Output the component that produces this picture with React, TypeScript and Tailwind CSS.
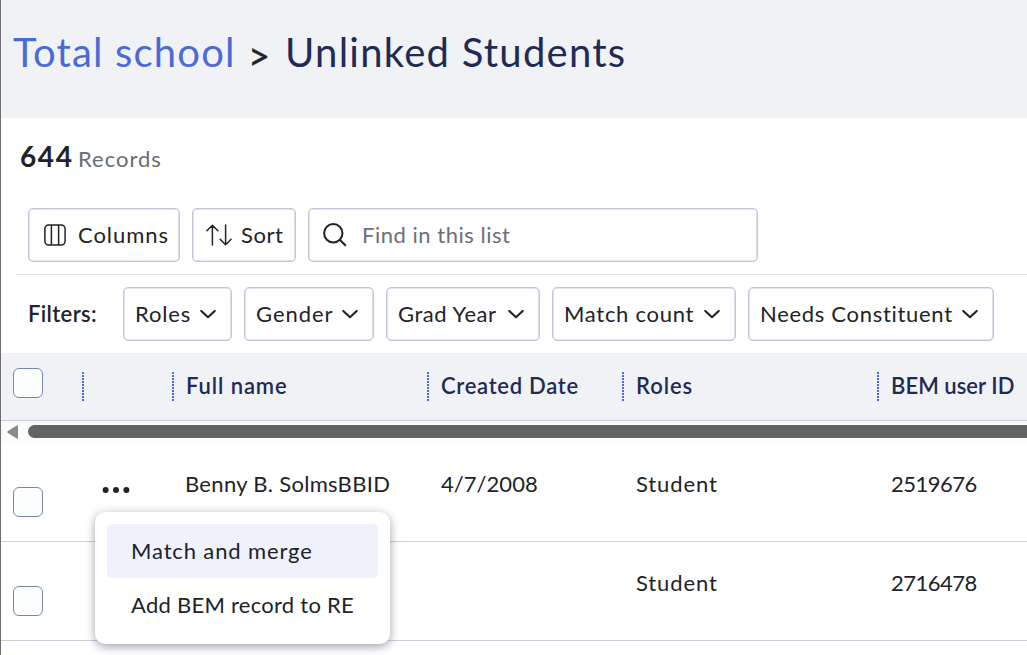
import React from "react";
import type { ReactNode } from "react";

const box = "flex h-[54px] shrink-0 items-center rounded-[5px] border border-[#c0c5da] bg-white whitespace-nowrap shadow-[inset_0_0_0_0.6px_#c9cde0]";
const grid = "grid grid-cols-[83px_90px_255px_195px_255px_1fr]";

function Checkbox({ className = "" }: { className?: string }) {
  return <span className={`block size-[30px] rounded-[6px] border border-[#7687b6] bg-[#fcfdfd] ${className}`} />;
}

function ColumnsIcon() {
  return (
    <svg className="h-[22px] w-[22px] shrink-0" viewBox="0 0 22 22" fill="none" stroke="#212327" strokeWidth="1.5">
      <rect x="0.9" y="0.9" width="20.2" height="20.2" rx="3.8" />
      <path d="M7.4 1v20M14.6 1v20" />
    </svg>
  );
}

function SortIcon() {
  return (
    <svg className="h-[22px] w-[26px] shrink-0" viewBox="0 0 26 22" fill="none" stroke="#212327" strokeWidth="1.5" strokeLinecap="round" strokeLinejoin="round">
      <path d="M6.4 21V1.2M.9 6.7l5.5-5.5 5.5 5.5M19.6 1v19.8M14.1 15.3l5.5 5.5 5.5-5.5" />
    </svg>
  );
}

function SearchIcon() {
  return (
    <svg className="h-[24px] w-[24px] shrink-0" viewBox="0 0 24 24" fill="none" stroke="#212327" strokeWidth="2">
      <circle cx="10.3" cy="10.3" r="9.2" />
      <path d="M16.8 16.8l6 6" />
    </svg>
  );
}

function Chevron() {
  return (
    <svg className="h-[10px] w-[16px] shrink-0" viewBox="0 0 16 10" fill="none" stroke="#212327" strokeWidth="2.1" strokeLinecap="round" strokeLinejoin="round">
      <path d="M1.3 1.9L8 8.2l6.7-6.3" />
    </svg>
  );
}

function Filter({ label, className }: { label: string; className: string }) {
  return (
    <button className={`${box} justify-between pr-[15px] pl-[11px] ${className}`}>
      <span>{label}</span>
      <Chevron />
    </button>
  );
}

function HeaderCell({ children }: { children?: ReactNode }) {
  return (
    <div className="flex h-[65px] items-center justify-between">
      <span className="whitespace-nowrap">{children}</span>
      <span className="mt-px h-[29px] w-[2px] bg-[repeating-linear-gradient(to_bottom,#4a6bdc_0_2px,transparent_2px_3px)]" />
    </div>
  );
}

function Row({ menu, name, date, role, id }: { menu?: ReactNode; name?: string; date?: string; role: string; id: string }) {
  return (
    <div className={`${grid} h-[99px] border-b border-[#cbd0dd]`}>
      <Checkbox className="mt-[44px] ml-[12px]" />
      <div>{menu}</div>
      <div className="pt-[28px] pl-[11px] tracking-[0.31px] whitespace-nowrap">{name}</div>
      <div className="pt-[28px] pl-[12px] tracking-[0.04px]">{date}</div>
      <div className="pt-[28px] pl-[12px] tracking-[0.89px]">{role}</div>
      <div className="pt-[28px] pl-[12px] tracking-[-0.5px]">{id}</div>
    </div>
  );
}

export default function App() {
  return (
    <div className="h-[655px] w-[1027px] overflow-hidden border-l border-[#6e6e6e] bg-white font-['Lato',sans-serif] text-[22px] leading-[26px] text-[#212327]">
      <header className="flex h-[118px] items-start bg-[#f1f2f6] pt-[27px] pl-[12px] text-[40px] leading-[50px] whitespace-nowrap">
        <a className="w-[235px] tracking-[1.18px] text-[#4a6bd4]">Total school</a>
        <span className="w-[37px] pt-[3px] text-[38px] leading-[50px] [-webkit-text-stroke:0.4px_#212327]">&gt;</span>
        <h1 className="tracking-[1.25px] text-[#1e2b54]">Unlinked Students</h1>
      </header>

      <section className="flex h-[90px] items-start pt-[25px] pl-[19px]">
        <span className="w-[58px] text-[28px] font-bold leading-[26px] tracking-[1.6px]">644</span>
        <span className="pt-[3px] tracking-[1px] text-[#686c73]">Records</span>
      </section>

      <section className="ml-[15px] flex h-[67px] gap-[12px] border-b border-[#e2e3e6] pl-[12px]">
        <button className={`${box} w-[152px] gap-[12px] pl-[15px] tracking-[0.95px]`}>
          <ColumnsIcon />
          Columns
        </button>
        <button className={`${box} w-[104px] gap-[9px] pl-[13px] tracking-[0.55px]`}>
          <SortIcon />
          Sort
        </button>
        <div className={`${box} w-[450px] gap-[15px] pl-[14px] tracking-[0.52px] text-[#6c6f76]`}>
          <SearchIcon />
          Find in this list
        </div>
      </section>

      <section className="flex h-[78px] items-start gap-[12px] pt-[12px] pl-[27px]">
        <span className="w-[83px] pt-[14px] font-semibold tracking-[0.36px]">Filters:</span>
        <Filter label="Roles" className="w-[109px] tracking-[0.85px]" />
        <Filter label="Gender" className="w-[130px] tracking-[0.95px]" />
        <Filter label="Grad Year" className="w-[154px] tracking-[0.56px]" />
        <Filter label="Match count" className="w-[184px] tracking-[0.72px]" />
        <Filter label="Needs Constituent" className="w-[246px] tracking-[0.7px]" />
      </section>

      <div className={`${grid} h-[68px] border-b border-[#c6cce0] bg-[#f1f2f6] font-semibold text-[#1e2b54]`}>
        <div className="flex items-start justify-between">
          <Checkbox className="mt-[15px] ml-[12px]" />
          <HeaderCell />
        </div>
        <HeaderCell />
        <HeaderCell><span className="pl-[12px] tracking-[0.9px]">Full name</span></HeaderCell>
        <HeaderCell><span className="pl-[12px] tracking-[0.7px]">Created Date</span></HeaderCell>
        <HeaderCell><span className="pl-[12px] tracking-[0.95px]">Roles</span></HeaderCell>
        <div className="flex h-[65px] items-center pl-[12px] tracking-[0.05px] whitespace-nowrap">BEM user ID</div>
      </div>

      <div className="flex h-[22px] items-start bg-[#fbfbfb] pt-[4px] pl-[6px]">
        <svg className="h-[15px] w-[12px]" viewBox="0 0 12 15" fill="#8a8a8a">
          <path d="M9.8.4Q11-.2 11 1.2V12.8Q11 14.2 9.8 13.6L.8 8Q-.2 7 .8 6Z" />
        </svg>
        <div className="ml-[9px] h-[13px] flex-1 rounded-l-full bg-[#636363]" />
      </div>

      <main>
        <Row
          name="Benny B. SolmsBBID"
          date="4/7/2008"
          role="Student"
          id="2519676"
          menu={
            <div className="relative pt-[43px] pl-[18px]">
              <svg className="h-[8px] w-[28px]" viewBox="0 0 28 8" fill="#212327">
                <circle cx="3.6" cy="4" r="3" />
                <circle cx="14" cy="4" r="3" />
                <circle cx="24.4" cy="4" r="3" />
              </svg>
              <div className="absolute top-[69px] left-[11px] z-10 h-[132px] w-[295px] rounded-[10px] bg-white p-[12px] shadow-[0_3px_9px_rgba(30,35,55,0.36),0_0_14px_rgba(30,35,55,0.08)]">
                <div className="flex h-[54px] items-center rounded-[5px] bg-[#eff2fc] pl-[24px] tracking-[0.87px] whitespace-nowrap">Match and merge</div>
                <div className="flex h-[54px] items-center pl-[24px] tracking-[0.26px] whitespace-nowrap">Add BEM record to RE</div>
              </div>
            </div>
          }
        />
        <Row role="Student" id="2716478" />
      </main>
    </div>
  );
}
